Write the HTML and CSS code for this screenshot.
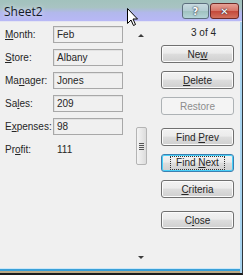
FILE: index.html
```html
<!DOCTYPE html>
<html lang="en">
<head>
  <meta charset="UTF-8" />
  <title>Sheet2</title>
  <link rel="stylesheet" href="styles.css">
</head>
<body>
  <div class="window">
    <!-- Title bar -->
    <div class="titlebar">
      <span class="title">Sheet2</span>
      <div class="caption">
        <div class="cap help">?</div>
        <div class="cap close">&#x2715;</div>
      </div>
    </div>

    <!-- Dialog body -->
    <div class="client">
      <div class="fields">
        <div class="row"><span class="label"><u>M</u>onth:</span><div class="box">Feb</div></div>
        <div class="row"><span class="label"><u>S</u>tore:</span><div class="box">Albany</div></div>
        <div class="row"><span class="label">Ma<u>n</u>ager:</span><div class="box">Jones</div></div>
        <div class="row"><span class="label">Sa<u>l</u>es:</span><div class="box">209</div></div>
        <div class="row"><span class="label">E<u>x</u>penses:</span><div class="box">98</div></div>
        <div class="row"><span class="label">Pr<u>o</u>fit:</span><span class="value">111</span></div>
      </div>

      <div class="scroll">
        <span class="arrow up"></span>
        <div class="thumb"><span class="grip"></span></div>
        <span class="arrow down"></span>
      </div>

      <div class="actions">
        <div class="count">3 of 4</div>
        <button class="btn"><span>Ne<u>w</u></span></button>
        <button class="btn"><span><u>D</u>elete</span></button>
        <button class="btn" disabled><span>Restore</span></button>
        <button class="btn gap"><span>Find <u>P</u>rev</span></button>
        <button class="btn focus"><span class="focus-ring">Find <u>N</u>ext</span></button>
        <button class="btn"><span><u>C</u>riteria</span></button>
        <button class="btn gap"><span>C<u>l</u>ose</span></button>
      </div>
    </div>

    <!-- Mouse pointer over the title bar -->
    <svg class="cursor" width="12" height="19" viewBox="0 0 12 19">
      <path d="M0.5 0.5 L0.5 15.5 L4 12 L6.5 17.5 L8.5 16.5 L6 11 L10.5 11 Z" fill="#fff" stroke="#000" stroke-width="1"/>
    </svg>
  </div>
</body>
</html>
```

FILE: styles.css
```css
* { box-sizing: border-box; margin: 0; padding: 0; }
body {
  background: #fff;
  font-family: 'Liberation Sans', Arial, sans-serif;
  font-size: 10px;
  color: #262626;
}
.window {
  width: 243px; height: 275px;
  position: relative;
  background: #f0f0f0;
  border-right: 1px solid #30363b;
  border-bottom: 2px solid #1b1b1b;
  box-shadow: inset -2px 0 #a8d4f0, inset 0 -2px #b9a987, inset 0 -4px #3aa0d8, inset 0 -5px #cbe7f8;
}
.titlebar {
  height: 22px;
  display: flex; align-items: center; justify-content: space-between;
  padding: 0 3px 0 4px;
  background: linear-gradient(to bottom, #a2c2bd 0%, #a8c3c2 35%, #b2b8ec 60%, #b8b8f6 100%);
  border-bottom: 1px solid #e4e4f2;
}
.title {
  font-family: 'Open Sans', sans-serif;
  font-size: 12px;
  color: #141a28;
  text-shadow: 0 0 5px rgba(255,255,255,0.8);
  margin-top: 2px;
}
.caption { display: flex; gap: 1px; align-self: flex-start; margin-top: 3px; }
.cap {
  height: 16px;
  border: 1px solid #5d6f7e;
  border-radius: 3px;
  display: flex; align-items: center; justify-content: center;
  font-family: 'DejaVu Sans', sans-serif; font-weight: bold;
  color: #fff;
  font-size: 10px;
  text-shadow: 0 0 2px #334, 0 0 1px #223;
}
.help {
  width: 27px;
  background: linear-gradient(to bottom, #c8dae0 0%, #b2ccd2 50%, #a0c2c0 51%, #b4d4d8 100%);
}
.close {
  width: 29px;
  border-color: #6e2a26;
  background: linear-gradient(to bottom, #e6a296 0%, #d67466 50%, #c4483a 51%, #d2705e 100%);
}

/* —— Dialog body —— */
.client { display: flex; height: 245px; }
.fields {
  width: 135px;
  padding: 4px 0 0 5px;
  display: flex; flex-direction: column; gap: 6px;
}
.row { display: flex; align-items: center; height: 17px; }
.label { width: 48px; }
.box {
  width: 70px; height: 17px;
  border: 1px solid #a8a8a8;
  box-shadow: inset 1px 1px #e2e2e2;
  background: #f0f0f0;
  padding-left: 3px;
  line-height: 15px;
}
.value { padding-left: 4px; }

.scroll {
  width: 12px;
  display: flex; flex-direction: column; align-items: center;
  padding-top: 12px;
}
.arrow { width: 0; height: 0; border-left: 3px solid transparent; border-right: 3px solid transparent; }
.arrow.up { border-bottom: 3px solid #3c3c3c; }
.arrow.down { border-top: 3px solid #3c3c3c; margin-top: 91px; }
.thumb {
  width: 11px; height: 38px;
  margin-top: 90px;
  border: 1px solid #b4b4b4;
  border-radius: 2px;
  background: linear-gradient(to right, #f4f4f4, #e6e6e6 60%, #dcdcdc);
  display: flex; align-items: center; justify-content: center;
}
.grip {
  width: 5px; height: 7px;
  background: repeating-linear-gradient(to bottom, #555 0 1px, transparent 1px 2px);
}

.actions {
  width: 73px;
  margin-left: 14px;
  display: flex; flex-direction: column; gap: 8px;
  padding-top: 4px;
}
.count { text-align: center; height: 13px; line-height: 13px; margin-bottom: -2px; padding-left: 12px; }
.btn {
  height: 18px;
  font: inherit; color: #262626;
  border: 1px solid #707070;
  border-radius: 3px;
  background: linear-gradient(to bottom, #f2f2f2 0%, #ebebeb 45%, #dddddd 50%, #cfcfcf 100%);
  box-shadow: inset 0 0 0 1px #fbfbfb;
  display: flex; align-items: center; justify-content: center;
}
.btn.gap { margin-top: 5px; }
.btn:disabled {
  color: #8d8d8d;
  border-color: #adb2b5;
  background: #f4f4f4;
  box-shadow: none;
}
.btn.focus {
  border-color: #3c7fb1;
  box-shadow: inset 0 0 0 1px #48d0f8;
}
.focus-ring { outline: 1px dotted #333; padding: 0 5px; line-height: 12px; }

.cursor { position: absolute; left: 127px; top: 8px; }
```
